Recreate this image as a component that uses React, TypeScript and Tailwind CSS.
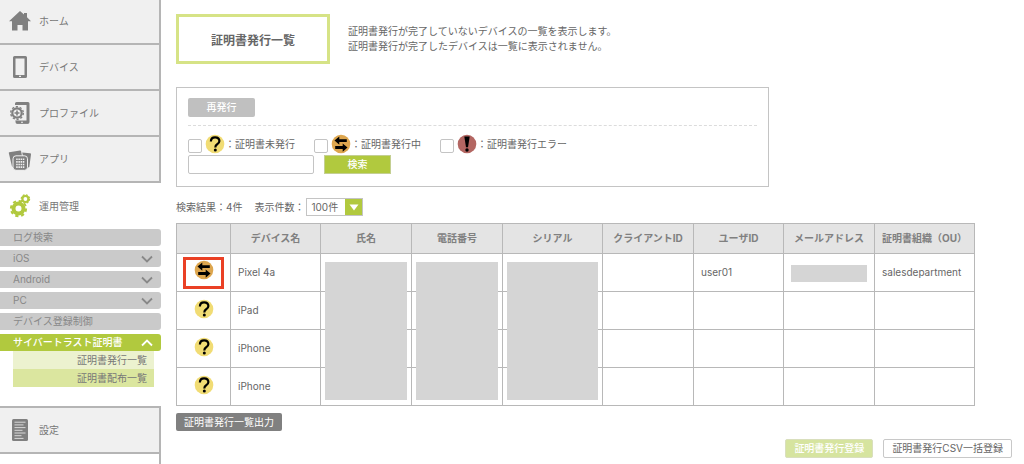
import { useState } from "react";
import type { ReactNode } from "react";

type Status = "none" | "issuing" | "error";

function HomeIcon() {
  return (
    <svg viewBox="0 0 24 24" className="size-6" fill="#808080" aria-hidden="true">
      <path d="M12 2 1 12.200h3v9.300h5.500V16h5v5.500H20v-9.300h3l-4-3.900V4h-3v1.600z" />
    </svg>
  );
}

function DeviceIcon() {
  return (
    <svg viewBox="0 0 24 24" className="size-6" fill="#808080" aria-hidden="true">
      <path
        fillRule="evenodd"
        d="M6.500 1h11A1.500 1.500 0 0 1 19 2.500v19a1.500 1.500 0 0 1-1.500 1.500h-11A1.500 1.500 0 0 1 5 21.500v-19A1.500 1.500 0 0 1 6.500 1zM7.500 3.500v16.500h9V3.500z"
      />
      <path d="M11 20.700h2v1.200h-2z" fill="#f0f0f0" />
    </svg>
  );
}

function ProfileIcon() {
  return (
    <svg viewBox="0 0 24 24" className="size-6" aria-hidden="true">
      <path
        d="M8.500 4V2.500h11.500v18.500H9V19"
        fill="none"
        stroke="#808080"
        strokeWidth="3"
        strokeLinejoin="round"
      />
      <path d="M8.500 20h12v2.800h-12z" fill="#808080" />
      <path d="M13 20.800h2v1h-2z" fill="#f0f0f0" />
      <circle cx="9" cy="12" r="7.600" fill="#f0f0f0" />
      <circle cx="9" cy="12" r="4.700" fill="none" stroke="#808080" strokeWidth="2.200" />
      <circle cx="9" cy="12" r="6.300" fill="none" stroke="#808080" strokeWidth="1.400" strokeDasharray="2.200 1.758" />
      <path d="M9 9.500v5M6.500 12h5" stroke="#808080" strokeWidth="1.600" />
    </svg>
  );
}

function AppIcon() {
  return (
    <svg viewBox="0 0 24 24" className="size-6" fill="#808080" aria-hidden="true">
      <path d="M1.200 5.200 12 3.500a1 1 0 0 1 1.100.8L14 9 6 20.500l-2-1L.9 6.500a1 1 0 0 1 .3-1.300z" />
      <path d="M14.200 5.500 22 6.300a1 1 0 0 1 1 1.200L21.300 20l-2.300 1-4-12z" />
      <rect x="5" y="8.800" width="14.500" height="14.500" rx="3" stroke="#f0f0f0" strokeWidth="1" />
      <path
        d="M8.200 12.300h8.100M8.200 14.900h8.100M8.200 17.500h8.100M8.200 20.100h8.100"
        stroke="#f0f0f0"
        strokeWidth="1.600"
        strokeDasharray="1.500 .7"
      />
    </svg>
  );
}

function GearsIcon() {
  return (
    <svg viewBox="0 0 24 24" className="size-6" fill="none" stroke="#b1c93e" aria-hidden="true">
      <circle cx="10.500" cy="14.600" r="5" strokeWidth="4" />
      <circle cx="10.500" cy="14.600" r="7.600" strokeWidth="2" strokeDasharray="3.200 2.769" />
      <circle cx="17.400" cy="5" r="3" strokeWidth="2.200" />
      <circle cx="17.400" cy="5" r="4.200" strokeWidth="1.200" strokeDasharray="1.900 1.399" />
    </svg>
  );
}

function SettingsIcon() {
  return (
    <svg viewBox="0 0 24 24" className="size-6" aria-hidden="true">
      <rect x="4" y="1" width="16" height="22" rx="1.500" fill="#808080" />
      <path
        d="M6.500 4.200h11M6.500 6.900h9M6.500 9.600h11M6.500 12.300h8M6.500 15h11M6.500 17.700h7M6.500 20.400h9"
        stroke="#d8d8d8"
        strokeWidth="1"
      />
    </svg>
  );
}

function Chevron({ up = false }: { up?: boolean }) {
  return (
    <svg viewBox="0 0 12 8" className="h-2 w-3" fill="none" stroke="currentColor" strokeWidth="1.800" aria-hidden="true">
      <path d={up ? "M1 6.500 6 1.500l5 5" : "M1 1.500l5 5 5-5"} />
    </svg>
  );
}

function StatusIcon({ status }: { status: Status }) {
  if (status === "none") {
    return (
      <svg viewBox="0 0 20 20" className="size-5 shrink-0" role="img" aria-label="未発行">
        <circle cx="10" cy="10" r="9.300" fill="#f1dc74" />
        <path
          d="M5.900 7.600Q5.900 3.300 10.100 3.300T14.400 7q0 1.900-2.200 3.200-1.900 1.100-1.900 3.200"
          fill="none"
          stroke="#000"
          strokeWidth="2.200"
        />
        <circle cx="10.300" cy="16" r="1.500" />
      </svg>
    );
  }
  if (status === "issuing") {
    return (
      <svg viewBox="0 0 20 20" className="size-5 shrink-0" role="img" aria-label="発行中">
        <circle cx="10" cy="10" r="9.300" fill="#dda64f" />
        <path d="M3.500 6.600 8.300 2.500v2.700h7.500v2.900H8.300v2.700z" />
        <path d="M16.500 13.500l-4.800-4.100v2.700H4.200V15h7.500v2.700z" />
      </svg>
    );
  }
  return (
    <svg viewBox="0 0 20 20" className="size-5 shrink-0" role="img" aria-label="エラー">
      <circle cx="10" cy="10" r="9.300" fill="#b36662" />
      <path d="M7.300 2.500h5.400L11 13.300H9z" />
      <circle cx="10" cy="16" r="1.700" />
    </svg>
  );
}

function NavItem({ icon, label, active = false }: { icon: ReactNode; label: string; active?: boolean }) {
  return (
    <a
      href="#"
      className={`flex h-[46px] items-center gap-[7px] pl-2 ${
        active ? "" : "border-r-2 border-b-2 border-[#b5b5b5] bg-[#f0f0f0]"
      }`}
    >
      {icon}
      {label}
    </a>
  );
}

const subMenus = [
  { label: "ログ検索", expandable: false },
  { label: "iOS", expandable: true },
  { label: "Android", expandable: true },
  { label: "PC", expandable: true },
  { label: "デバイス登録制御", expandable: false },
];

function Sidebar() {
  return (
    <nav className="-mt-px flex w-[161px] shrink-0 flex-col text-[#777]">
      <NavItem icon={<HomeIcon />} label="ホーム" />
      <NavItem icon={<DeviceIcon />} label="デバイス" />
      <NavItem icon={<ProfileIcon />} label="プロファイル" />
      <NavItem icon={<AppIcon />} label="アプリ" />
      <NavItem icon={<GearsIcon />} label="運用管理" active />

      <div className="flex flex-col gap-1">
        {subMenus.map((menu) => (
          <button
            key={menu.label}
            type="button"
            className="flex h-[17px] items-center justify-between rounded-r-[3px] bg-[#cacaca] pr-2 pl-[13px] text-[#888]"
          >
            {menu.label}
            {menu.expandable && <Chevron />}
          </button>
        ))}
        <button
          type="button"
          className="flex h-[17px] items-center justify-between rounded-r-[3px] bg-[#b1c93e] pr-2 pl-[13px] font-medium text-white"
        >
          サイバートラスト証明書
          <Chevron up />
        </button>
      </div>
      <div className="mr-[7px] ml-[13px] text-right leading-[18px]">
        <a href="#" className="block bg-[#ecf2cf] pr-[7px]">
          証明書発行一覧
        </a>
        <a href="#" className="block bg-[#dbe69f] pr-[7px]">
          証明書配布一覧
        </a>
      </div>

      <div className="mt-[19px] border-t-2 border-[#b5b5b5]">
        <NavItem icon={<SettingsIcon />} label="設定" />
      </div>
      <div className="flex-1 border-r-2 border-[#b5b5b5]" />
    </nav>
  );
}

const filters: { status: Status; label: string }[] = [
  { status: "none", label: "証明書未発行" },
  { status: "issuing", label: "証明書発行中" },
  { status: "error", label: "証明書発行エラー" },
];

function SearchPanel() {
  return (
    <form
      className="mt-[23px] h-[100px] w-full max-w-[593px] border border-[#c4c4c4] px-[11px] pt-[10px]"
      onSubmit={(e) => e.preventDefault()}
    >
      <button type="button" className="block h-[19px] w-[67px] rounded-[2px] bg-[#c0c0c0] font-medium text-white">
        再発行
      </button>
      <div className="mt-2 border-t border-dashed border-[#dcdcdc]" />
      <div className="mt-2 flex">
        {filters.map((filter) => (
          <label key={filter.status} className="flex min-w-[126px] items-center">
            <input
              type="checkbox"
              className="mt-1 mr-[3px] size-[14px] shrink-0 appearance-none rounded-[2px] border border-[#c4c4c4] bg-white checked:bg-[#b1c93e]"
            />
            <StatusIcon status={filter.status} />：{filter.label}
          </label>
        ))}
      </div>
      <div className="mt-px flex gap-[10px]">
        <input
          type="text"
          aria-label="検索キーワード"
          className="h-[19px] w-[126px] rounded-[2px] border border-[#c4c4c4] px-1"
        />
        <button type="submit" className="h-[19px] w-[67px] border border-[#c4cf92] bg-[#b1c93e] font-medium text-white">
          検索
        </button>
      </div>
    </form>
  );
}

const columns = [
  { label: "", width: "w-[54px]" },
  { label: "デバイス名", width: "w-[90px]" },
  { label: "氏名", width: "w-[91px]" },
  { label: "電話番号", width: "w-[91px]" },
  { label: "シリアル", width: "w-[100px]" },
  { label: "クライアントID", width: "w-[91px]" },
  { label: "ユーザID", width: "w-[90px]" },
  { label: "メールアドレス", width: "w-[91px]" },
  { label: "証明書組織（OU）", width: "w-[100px]" },
];

const devices: { name: string; status: Status; user?: string; ou?: string }[] = [
  { name: "Pixel 4a", status: "issuing", user: "user01", ou: "salesdepartment" },
  { name: "iPad", status: "none" },
  { name: "iPhone", status: "none" },
  { name: "iPhone", status: "none" },
];

const cell = "border border-[#b8b8b8]";

// One mask hangs from the first row and covers the column down to the last.
function MaskedCell({ masked }: { masked: boolean }) {
  return (
    <td className={`relative ${cell}`}>
      {masked && <div className="absolute top-2 right-1 left-1 z-10 h-[138px] bg-[#d5d5d5]" />}
    </td>
  );
}

function DeviceTable() {
  return (
    <table className="mt-[7px] w-full max-w-[799px] table-fixed border-collapse">
      <thead>
        <tr className="h-[30px] bg-[#e4e4e4] text-[#808080]">
          {columns.map((column) => (
            <th key={column.label} className={`${cell} ${column.width} p-0 font-bold whitespace-nowrap`}>
              {column.label}
            </th>
          ))}
        </tr>
      </thead>
      <tbody>
        {devices.map((device, i) => (
          <tr key={i} className="h-[38px]">
            <td className={`${cell} p-0`}>
              {i === 0 ? (
                <div className="mx-auto flex h-8 w-[41px] items-start justify-center border-[3px] border-[#ea4025]">
                  <StatusIcon status={device.status} />
                </div>
              ) : (
                <div className="flex justify-center pb-1">
                  <StatusIcon status={device.status} />
                </div>
              )}
            </td>
            <td className={`${cell} px-[7px] py-0`}>{device.name}</td>
            <MaskedCell masked={i === 0} />
            <MaskedCell masked={i === 0} />
            <MaskedCell masked={i === 0} />
            <td className={cell} />
            <td className={`${cell} px-[7px] py-0`}>{device.user}</td>
            <td className={`${cell} px-[7px] pt-[2px]`}>
              {i === 0 && <div className="h-[17px] bg-[#d5d5d5]" />}
            </td>
            <td className={`${cell} px-[7px] py-0`}>{device.ou}</td>
          </tr>
        ))}
      </tbody>
    </table>
  );
}

export default function App() {
  const [pageSize, setPageSize] = useState("100");

  return (
    <div className="flex min-h-screen bg-white font-[Inter,'Noto_Sans_CJK_JP',sans-serif] text-[10px] leading-[15px] text-[#666]">
      <Sidebar />

      <main className="min-w-0 flex-1 pt-[14px] pr-3 pl-[15px]">
        <header className="flex items-start gap-[18px]">
          <h1 className="flex h-[50px] w-[154px] shrink-0 items-center justify-center border-[3px] border-[#d6e386] pt-[2px] text-[12px] font-bold">
            証明書発行一覧
          </h1>
          <p className="pt-[10px]">
            証明書発行が完了していないデバイスの一覧を表示します。
            <br />
            証明書発行が完了したデバイスは一覧に表示されません。
          </p>
        </header>

        <SearchPanel />

        <div className="mt-[11px] flex h-[18px] items-center">
          <span className="mr-3">検索結果：4件</span>
          <label htmlFor="page-size">表示件数：</label>
          <div className="relative ml-[2px] h-[18px] w-[57px]">
            <select
              id="page-size"
              value={pageSize}
              onChange={(e) => setPageSize(e.target.value)}
              className="h-full w-full appearance-none border border-[#c4c4c4] bg-white pl-1"
            >
              <option value="50">50件</option>
              <option value="100">100件</option>
            </select>
            <div className="pointer-events-none absolute top-px right-px bottom-px flex w-[17px] items-center justify-center bg-[#b1c93e]">
              <svg viewBox="0 0 10 7" className="h-[7px] w-[10px]" fill="#fff" aria-hidden="true">
                <path d="M.5.5h9L5 6.500z" />
              </svg>
            </div>
          </div>
        </div>

        <DeviceTable />

        <button type="button" className="mt-[7px] block h-[18px] rounded-[2px] bg-[#808080] px-2 text-white">
          証明書発行一覧出力
        </button>

        <div className="mt-2 flex justify-end gap-[10px] pb-[6px]">
          <button
            type="button"
            className="h-[19px] rounded-[2px] border border-[#d9dfbd] bg-[#d6e49f] px-2 font-medium text-white"
          >
            証明書発行登録
          </button>
          <button type="button" className="h-[19px] rounded-[2px] border border-[#c8c8c8] bg-white px-2">
            証明書発行CSV一括登録
          </button>
        </div>
      </main>
    </div>
  );
}
